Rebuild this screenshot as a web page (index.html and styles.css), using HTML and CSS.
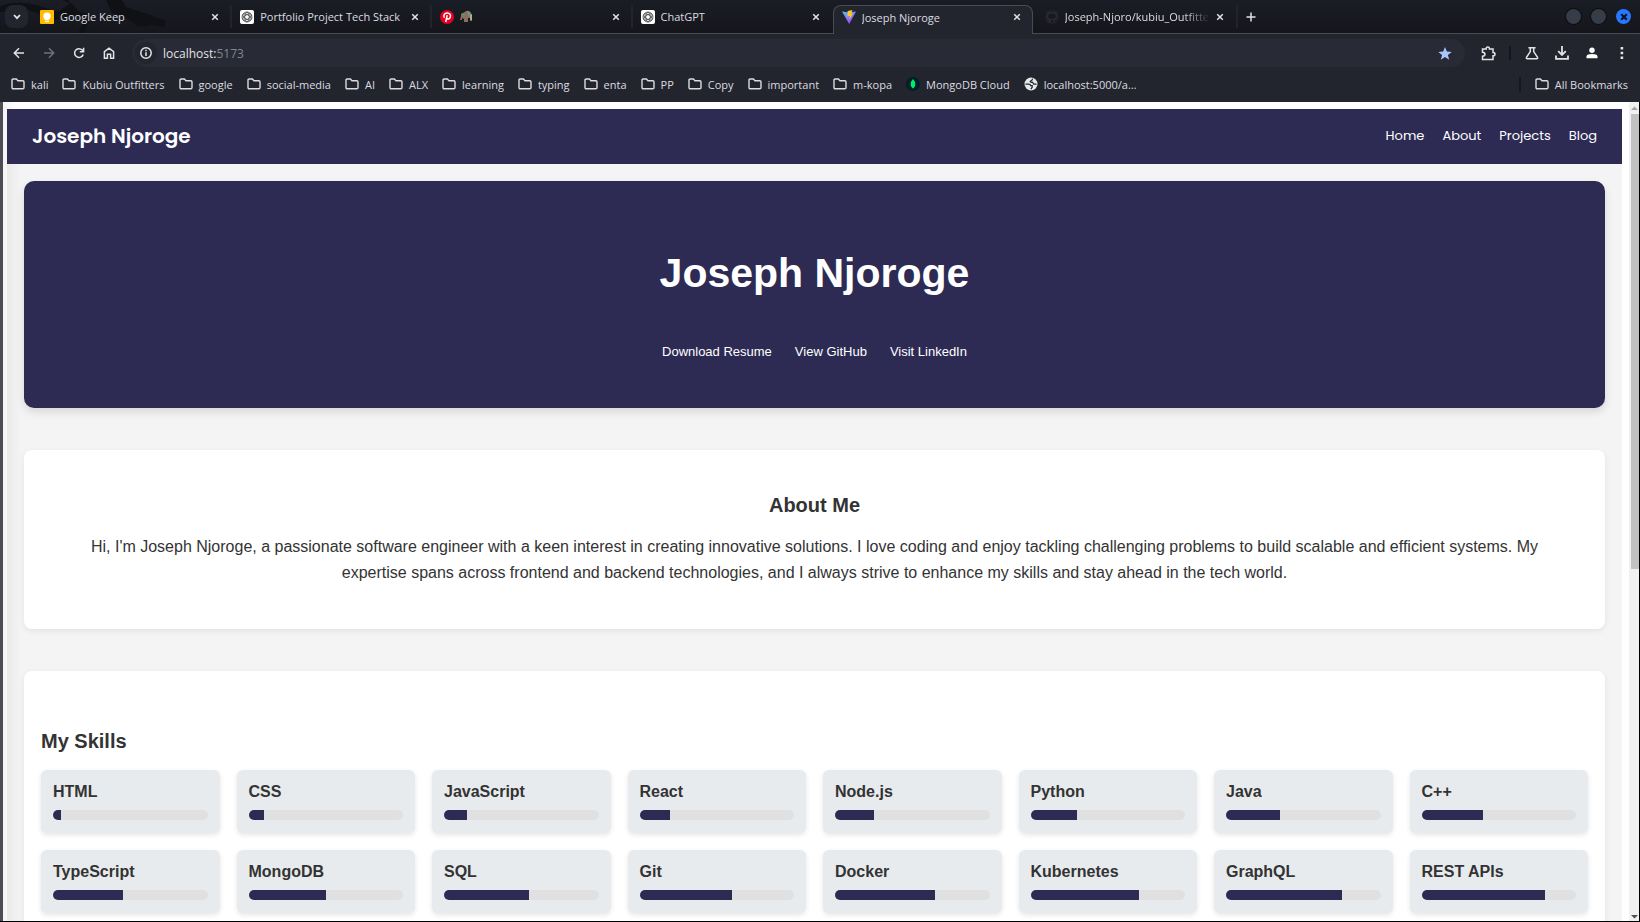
FILE: index.html
```html
<!DOCTYPE html>
<html lang="en">
<head>
<meta charset="utf-8">
<title>Joseph Njoroge</title>
<link rel="stylesheet" href="styles.css">
</head>
<body>
<svg class="defs" aria-hidden="true">
  <symbol id="folder" viewBox="0 0 14 12"><path d="M1 2.2Q1 1 2.2 1H5.4L7 2.8H11.8Q13 2.8 13 4V9.6Q13 10.8 11.8 10.8H2.2Q1 10.8 1 9.6Z" fill="none" stroke="currentColor" stroke-width="1.4"/></symbol>
  <symbol id="x" viewBox="0 0 8 8"><path d="M1.2 1.2 6.8 6.8M6.8 1.2 1.2 6.8" stroke="currentColor" stroke-width="1.5"/></symbol>
  <symbol id="gpt" viewBox="0 0 14 14"><rect width="14" height="14" rx="2" fill="#fff"/><g fill="none" stroke="#333" stroke-width=".7"><circle cx="7" cy="7" r="5"/><ellipse cx="7" cy="7" rx="4.8" ry="2.2" transform="rotate(30 7 7)"/><ellipse cx="7" cy="7" rx="4.8" ry="2.2" transform="rotate(90 7 7)"/><ellipse cx="7" cy="7" rx="4.8" ry="2.2" transform="rotate(150 7 7)"/></g></symbol>
</svg>
<div class="window">
  <div class="tabstrip">
    <svg class="dragon" viewBox="0 0 170 33" aria-hidden="true"><path d="M0 6Q18 0 36 5L58 12 70 3 62 0H68L80 12 92 15 84 33H78L86 17 70 15 56 20 28 10 0 12Z"/><path d="M106 0H122L126 7 150 15 166 21 164 27 152 25 138 27 128 19 112 13Z"/></svg>
    <button class="tab-search" aria-label="Search tabs"><svg width="10" height="8" viewBox="0 0 10 8"><path d="M2 2 5 5.2 8 2" fill="none" stroke="#e3e3e6" stroke-width="1.8"/></svg></button>
    <div class="tabs">
      <div class="tab"><svg width="14" height="14" viewBox="0 0 14 14"><rect width="14" height="14" rx="1" fill="#fb0"/><circle cx="7" cy="6.2" r="3.7" fill="#fff"/><path d="M5 8h4v2H5zM5 10.7h4v1.3H5z" fill="#fff"/></svg><span class="tab-title">Google Keep</span><button class="close" aria-label="Close tab"><svg width="8" height="8"><use href="#x"/></svg></button></div>
      <div class="tab"><svg width="14" height="14"><use href="#gpt"/></svg><span class="tab-title">Portfolio Project Tech Stack</span><button class="close" aria-label="Close tab"><svg width="8" height="8"><use href="#x"/></svg></button></div>
      <div class="tab"><svg width="14" height="14" viewBox="0 0 14 14"><circle cx="7" cy="7" r="7" fill="#e60023"/><path d="M4.4 7.8C3 5.4 4.5 3 7.2 3 9.8 3 11 5 10.3 7 9.6 9.3 7.5 9.4 6.7 8.2M7.2 5.2 5.7 12" fill="none" stroke="#fff" stroke-width="1.5"/></svg><span class="tab-title"><svg width="13" height="13" viewBox="0 0 13 13"><path d="M1 6Q1 3 4 2.5L6 1Q9 0 11 3L12 6V11H10V8L8 8V12H4V9L2 8V10H0Z" fill="#8a6f60"/><circle cx="3" cy="5" r="2" fill="#6d8a58"/><path d="M7 1Q10 1 11 4L8 6Z" fill="#72928c"/><path d="M10 5 12 4V10H10Z" fill="#9fb592"/></svg></span><button class="close" aria-label="Close tab"><svg width="8" height="8"><use href="#x"/></svg></button></div>
      <div class="tab"><svg width="14" height="14"><use href="#gpt"/></svg><span class="tab-title">ChatGPT</span><button class="close" aria-label="Close tab"><svg width="8" height="8"><use href="#x"/></svg></button></div>
      <div class="tab active"><svg width="14" height="14" viewBox="0 0 14 14"><defs><linearGradient id="v" x1="0" y1="0" x2=".6" y2="1"><stop stop-color="#41c7ff"/><stop offset="1" stop-color="#b63dff"/></linearGradient></defs><path d="M0 1.6 7 2.5 14 1.6 7.2 14Z" fill="url(#v)"/><path d="M5.6 1 10.4 0 9.4 3.7 11 3.5 7.4 9.5 7.8 6 5.4 6.4Z" fill="#ffc61b"/></svg><span class="tab-title">Joseph Njoroge</span><button class="close" aria-label="Close tab"><svg width="8" height="8"><use href="#x"/></svg></button></div>
      <div class="tab"><svg width="14" height="14" viewBox="0 0 14 14"><path d="M5 13V11Q2.5 11.5 2 10M9 13V10.5L8.3 9.6Q12 9 11.6 5.8L10.9 4.2V2.2L8.8 3H5.2L3.1 2.2V4.2L2.4 5.8Q2 9 5.7 9.6L5 10.5" fill="none" stroke="#292d33" stroke-width="1.5"/><circle cx="7" cy="7" r="6.2" fill="none" stroke="#24282e"/></svg><span class="tab-title fade">Joseph-Njoro/kubiu_Outfitte</span><button class="close" aria-label="Close tab"><svg width="8" height="8"><use href="#x"/></svg></button></div>
    </div>
    <button class="new-tab" aria-label="New tab"><svg width="10" height="10" viewBox="0 0 10 10"><path d="M5 .5V9.5M.5 5H9.5" stroke="#e3e3e6" stroke-width="1.5"/></svg></button>
    <div class="controls"><button class="ctl" aria-label="Minimize"></button><button class="ctl" aria-label="Maximize"></button><button class="ctl quit" aria-label="Close window"><svg width="8" height="8" viewBox="0 0 8 8"><path d="M1.2 1.2 6.8 6.8M6.8 1.2 1.2 6.8" stroke="#101626" stroke-width="2.2"/></svg></button></div>
  </div>

  <div class="toolbar">
    <div class="nav-buttons">
      <button aria-label="Back"><svg width="12" height="12" viewBox="0 0 12 12"><path d="M11 6H1.5M6 1.2 1.3 6 6 10.8"/></svg></button>
      <button class="dim" aria-label="Forward"><svg width="12" height="12" viewBox="0 0 12 12"><path d="M1 6H10.5M6 1.2 10.7 6 6 10.8"/></svg></button>
      <button aria-label="Reload"><svg width="12" height="12" viewBox="0 0 12 12"><path d="M10.2 7.4A4.4 4.4 0 1 1 9.2 3L10.4 4.4M10.6 .8V4.7H6.8"/></svg></button>
      <button aria-label="Home"><svg width="12" height="12" viewBox="0 0 12 12"><path d="M1.4 11.2V4.6L6 1.1 10.6 4.6V11.2H7.6V7.2H4.4V11.2Z"/></svg></button>
    </div>
    <div class="omnibox">
      <button class="info" aria-label="View site information"><svg width="12" height="12" viewBox="0 0 12 12"><circle cx="6" cy="6" r="5.2"/><path d="M6 5.2V9M6 2.8V4.2"/></svg></button>
      <span class="url">localhost:<span class="port">5173</span></span>
      <button class="star" aria-label="Edit bookmark"><svg width="14" height="13" viewBox="0 0 14 13"><path d="M7 0 8.8 4.6 13.7 4.9 9.9 8 11.2 12.8 7 10.1 2.8 12.8 4.1 8 .3 4.9 5.2 4.6Z"/></svg></button>
    </div>
    <div class="tools">
      <button aria-label="Extensions"><svg width="15" height="15" viewBox="0 0 15 15"><path d="M1.5 3H5.2Q5 1 6.8 1T8.4 3H12V6.6Q14 6.6 14 8.2T12 9.8V13.5H1.5V10.2Q4 10 4 8.2T1.5 6.2Z"/></svg></button>
      <span class="divider"></span>
      <button aria-label="Labs"><svg width="14" height="14" viewBox="0 0 14 14"><path d="M3.4 1.7H10.6M5.3 2V5.6L1.5 11.3Q1.1 12.8 2.2 12.8H11.8Q12.9 12.8 12.5 11.3L8.7 5.6V2"/></svg></button>
      <button aria-label="Downloads"><svg width="14" height="14" viewBox="0 0 14 14"><path d="M7 0V8.6M3.2 5.2 7 9 10.8 5.2M1 9.5V12.8H13V9.5" stroke-width="1.8"/></svg></button>
      <button class="avatar" aria-label="Profile"><svg width="12" height="12" viewBox="0 0 12 12"><circle cx="6" cy="3.2" r="2.7"/><path d="M.5 11.3V9.4Q.7 7 6 7T11.5 9.4V11.3Z"/></svg></button>
      <button class="more" aria-label="Menu"><svg width="4" height="14" viewBox="0 0 4 14"><path d="M.6 1h2.6v2.5H.6zM.6 5.7h2.6v2.5H.6zM.6 10.4h2.6v2.5H.6z"/></svg></button>
    </div>
  </div>

  <nav class="bookmarks" aria-label="Bookmarks">
    <a href="#"><svg width="14" height="12"><use href="#folder"/></svg>kali</a>
    <a href="#"><svg width="14" height="12"><use href="#folder"/></svg>Kubiu Outfitters</a>
    <a href="#"><svg width="14" height="12"><use href="#folder"/></svg>google</a>
    <a href="#"><svg width="14" height="12"><use href="#folder"/></svg>social-media</a>
    <a href="#"><svg width="14" height="12"><use href="#folder"/></svg>AI</a>
    <a href="#"><svg width="14" height="12"><use href="#folder"/></svg>ALX</a>
    <a href="#"><svg width="14" height="12"><use href="#folder"/></svg>learning</a>
    <a href="#"><svg width="14" height="12"><use href="#folder"/></svg>typing</a>
    <a href="#"><svg width="14" height="12"><use href="#folder"/></svg>enta</a>
    <a href="#"><svg width="14" height="12"><use href="#folder"/></svg>PP</a>
    <a href="#"><svg width="14" height="12"><use href="#folder"/></svg>Copy</a>
    <a href="#"><svg width="14" height="12"><use href="#folder"/></svg>important</a>
    <a href="#"><svg width="14" height="12"><use href="#folder"/></svg>m-kopa</a>
    <a href="#"><svg width="14" height="14" viewBox="0 0 14 14"><circle cx="7" cy="7" r="7" fill="#001e2b"/><path d="M7 2Q10 5 9.3 8 9 10 7 11.6 5 10 4.7 8 4 5 7 2Z" fill="#00ed64"/></svg>MongoDB Cloud</a>
    <a href="#"><svg width="14" height="14" viewBox="0 0 14 14"><circle cx="7" cy="7" r="6.5" fill="#e8e8ea"/><path d="M1.5 7.2H5Q6.6 7.4 6.6 8.6H8.2V10.2L6.8 12.2M8.6 1.6 8 3.2 6.2 4.4Q6.4 5.6 8.4 5.2L9.8 7.2H12.6" fill="none" stroke="#23252e" stroke-width="1.2"/></svg>localhost:5000/a…</a>
    <a class="all" href="#"><svg width="14" height="12"><use href="#folder"/></svg>All Bookmarks</a>
  </nav>

  <div class="viewport">
    <div class="page">
      <header class="site-header">
        <div class="logo">Joseph Njoroge</div>
        <nav class="site-nav"><a href="#">Home</a><a href="#">About</a><a href="#">Projects</a><a href="#">Blog</a></nav>
      </header>
      <main class="content">
        <section class="hero">
          <h1>Joseph Njoroge</h1>
          <div class="hero-links"><a href="#">Download Resume</a><a href="#">View GitHub</a><a href="#">Visit LinkedIn</a></div>
        </section>
        <section class="card about">
          <h2>About Me</h2>
          <p>Hi, I'm Joseph Njoroge, a passionate software engineer with a keen interest in creating innovative solutions. I love coding and enjoy tackling challenging problems to build scalable and efficient systems. My expertise spans across frontend and backend technologies, and I always strive to enhance my skills and stay ahead in the tech world.</p>
        </section>
        <section class="card skills">
          <h2>My Skills</h2>
          <div class="grid">
            <div class="skill"><h3>HTML</h3><div class="bar"><div class="fill" style="width:5%"></div></div></div>
            <div class="skill"><h3>CSS</h3><div class="bar"><div class="fill" style="width:10%"></div></div></div>
            <div class="skill"><h3>JavaScript</h3><div class="bar"><div class="fill" style="width:15%"></div></div></div>
            <div class="skill"><h3>React</h3><div class="bar"><div class="fill" style="width:20%"></div></div></div>
            <div class="skill"><h3>Node.js</h3><div class="bar"><div class="fill" style="width:25%"></div></div></div>
            <div class="skill"><h3>Python</h3><div class="bar"><div class="fill" style="width:30%"></div></div></div>
            <div class="skill"><h3>Java</h3><div class="bar"><div class="fill" style="width:35%"></div></div></div>
            <div class="skill"><h3>C++</h3><div class="bar"><div class="fill" style="width:40%"></div></div></div>
            <div class="skill"><h3>TypeScript</h3><div class="bar"><div class="fill" style="width:45%"></div></div></div>
            <div class="skill"><h3>MongoDB</h3><div class="bar"><div class="fill" style="width:50%"></div></div></div>
            <div class="skill"><h3>SQL</h3><div class="bar"><div class="fill" style="width:55%"></div></div></div>
            <div class="skill"><h3>Git</h3><div class="bar"><div class="fill" style="width:60%"></div></div></div>
            <div class="skill"><h3>Docker</h3><div class="bar"><div class="fill" style="width:65%"></div></div></div>
            <div class="skill"><h3>Kubernetes</h3><div class="bar"><div class="fill" style="width:70%"></div></div></div>
            <div class="skill"><h3>GraphQL</h3><div class="bar"><div class="fill" style="width:75%"></div></div></div>
            <div class="skill"><h3>REST APIs</h3><div class="bar"><div class="fill" style="width:80%"></div></div></div>
          </div>
        </section>
      </main>
    </div>
    <div class="scrollbar" aria-hidden="true">
      <svg width="10" height="12" viewBox="0 0 10 12"><path d="M2 8 5.5 4.5 9 8Z" fill="#a3a3a3"/></svg>
      <div class="track"><div class="thumb"></div></div>
      <svg width="10" height="8" viewBox="0 0 10 8"><path d="M2 2 5.5 5.5 9 2Z" fill="#505050"/></svg>
    </div>
  </div>
</div>
</body>
</html>
```
FILE: styles.css
```css
* { box-sizing: border-box; }
body { margin: 0; background: #000; font-family: "Liberation Sans", Arial, sans-serif; }
h1, h2, h3, p { margin: 0; }
a { color: inherit; text-decoration: none; }
svg { display: block; flex: none; }
button { display: flex; align-items: center; justify-content: center; margin: 0; padding: 0; border: 0; background: none; color: #e3e3e6; }
.defs { position: absolute; width: 0; height: 0; }

.window { display: flex; flex-direction: column; height: 100vh; padding-bottom: 1px; overflow: hidden; }

/* Tab strip */
.tabstrip { position: relative; display: flex; align-items: center; height: 34px; padding: 0 9px 0 5px; background: linear-gradient(#1b1d26, #15161b); border-bottom: 1px solid #4a4b52; font-family: "Open Sans", "Noto Sans", sans-serif; font-size: 11px; color: #dcdce0; }
.dragon { position: absolute; left: 0; top: 0; width: 170px; height: 33px; fill: #101115; }
.tab-search { position: relative; width: 23px; height: 23px; border-radius: 8px; background: #22252e; }
.tabs { position: relative; display: flex; align-self: stretch; flex: 0 1 1206px; min-width: 0; margin-left: 4px; padding-top: 5px; }
.tab { display: flex; align-items: center; flex: 1; min-width: 0; height: 23px; gap: 6px; padding: 0 11px 0 8px; border-right: 2px solid #22242c; }
.tab:nth-child(4) { border-right-color: transparent; }
.tab-title { flex: 1; min-width: 0; overflow: hidden; white-space: nowrap; }
.fade { mask-image: linear-gradient(to right, #000 82%, transparent); }
.tab:last-child { padding: 0 12px 0 7px; }
.close { width: 8px; height: 14px; }
.tab.active { position: relative; height: 29px; margin-right: 5px; padding-bottom: 6px; border: 1px solid #4a4b52; border-bottom: 0; border-radius: 8px 8px 0 0; background: #23252e; }
.new-tab { width: 26px; height: 26px; }
.controls { display: flex; gap: 10px; margin-left: auto; }
.ctl { width: 15px; height: 15px; border-radius: 50%; background: #373c49; box-shadow: 0 0 0 1px #0c0d11; }
.quit { background: #2777ff; box-shadow: none; }

/* Toolbar */
.toolbar { display: flex; align-items: center; height: 38px; padding: 0 11px 0 4px; background: #23252e; }
.toolbar svg { fill: none; stroke: #e3e3e6; stroke-width: 1.5; }
.nav-buttons { display: flex; }
.nav-buttons button { width: 30px; height: 28px; }
.nav-buttons .dim svg { stroke: #70717a; }
.omnibox { display: flex; align-items: center; flex: 1; height: 28px; margin-left: 8px; padding: 0 13px 0 3px; border-radius: 14px; background: #282a35; }
.info { width: 22px; height: 22px; border-radius: 50%; background: #23252e; }
.url { margin-left: 6px; font: 12px "Open Sans", "Noto Sans", sans-serif; color: #e3e3e6; }
.port { color: #85868f; }
.toolbar .star { margin-left: auto; }
.toolbar .star svg { fill: #a8c7fa; stroke: none; }
.tools { display: flex; align-items: center; margin-left: 15px; }
.tools button { width: 30px; height: 28px; margin: 0; }
.tools button:first-child { width: 16px; }
.divider { width: 2px; height: 14px; margin: 0 6px 0 13px; background: #15161b; }
.toolbar .avatar svg, .toolbar .more svg { fill: #e3e3e6; stroke: none; }
.toolbar .avatar svg { fill: #fff; }
.tools .more { margin-right: -8px; }

/* Bookmarks bar */
.bookmarks { display: flex; align-items: center; gap: 14px; height: 30px; padding: 0 12px 6px 11px; background: #23252e; color: #dcdce0; font: 11px "Open Sans", "Noto Sans", sans-serif; white-space: nowrap; }
.bookmarks a { display: flex; align-items: center; gap: 6px; }
.bookmarks .all { margin-left: auto; padding-left: 14px; border-left: 2px solid #17181e; }

/* Page viewport */
.viewport { display: flex; flex: 1; min-height: 0; margin-right: 1px; border-left: 3px solid #4c4b56; background: #fff; }
.page { flex: 1; min-width: 0; padding: 7px 7px 0 4px; overflow: hidden; background: linear-gradient(to right, #f4f4f5, #fff 14px); }
.site-header { display: flex; align-items: center; justify-content: space-between; height: 55px; padding: 0 25px 2px; background: #2d2b54; color: #fff; font-family: Poppins, Inter, sans-serif; }
.logo { font-size: 20px; font-weight: 600; }
.site-nav { display: flex; gap: 18px; font-size: 13px; }
.content { display: flex; flex-direction: column; gap: 42px; padding: 17px; background: linear-gradient(to right, #eaeaea, #f4f4f4 14px); }
.hero { display: flex; flex-direction: column; align-items: center; gap: 48px; padding: 69px 24px 48px; border-radius: 10px; background: #2d2b54; color: #fff; box-shadow: 0 4px 8px rgba(0, 0, 0, .12); }
.hero h1 { font-size: 41px; line-height: 46px; }
.hero-links { display: flex; gap: 23px; font-size: 13px; line-height: 16px; }
.card { border-radius: 8px; background: #fff; color: #333; box-shadow: 0 2px 6px rgba(0, 0, 0, .07); }
.card h2 { margin-bottom: 16px; font-size: 20px; line-height: 26px; }
.about { padding: 42px 42px 43px; text-align: center; }
.about p { font-size: 16px; line-height: 26px; }
.skills { padding: 57px 17px 42px; }
.grid { display: grid; grid-template-columns: repeat(auto-fill, minmax(160px, 1fr)); gap: 17px; }
.skill { padding: 12px 12px 13px; border-radius: 6px; background: #e8ebee; box-shadow: 0 2px 5px rgba(0, 0, 0, .1); }
.skill h3 { margin-bottom: 8px; font-size: 16px; line-height: 20px; }
.bar { height: 10px; overflow: hidden; border-radius: 5px; background: #e0e0e0; }
.fill { height: 100%; background: #2d2b54; }

/* Scrollbar */
.scrollbar { display: flex; flex-direction: column; width: 10px; background: #f1f1f1; }
.track { flex: 1; padding-left: 2px; }
.thumb { height: 57%; background: #c1c1c1; }
```
